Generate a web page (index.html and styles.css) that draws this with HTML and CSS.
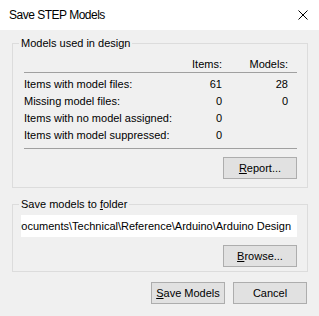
FILE: index.html
```html
<!DOCTYPE html>
<html lang="en">
<head>
    <meta charset="UTF-8">
    <meta name="viewport" content="width=device-width, initial-scale=1.0">
    <title>Save STEP Models</title>
    <link rel="stylesheet" href="styles.css">
</head>
<body>
    <div class="titlebar">
        <span class="title">Save STEP Models</span>
        <svg class="close" width="10" height="10" viewBox="0 0 10 10">
            <path d="M0.5 0.5L9.5 9.5M9.5 0.5L0.5 9.5" stroke="#000" stroke-width="1" fill="none"/>
        </svg>
    </div>
    <div class="main">
        <fieldset class="group">
            <legend>Models used in design</legend>
            <div class="row head"><span></span><span>Items:</span><span>Models:</span></div>
            <div class="stats">
                <div class="row"><span>Items with model files:</span><span>61</span><span>28</span></div>
                <div class="row"><span>Missing model files:</span><span>0</span><span>0</span></div>
                <div class="row"><span>Items with no model assigned:</span><span>0</span><span></span></div>
                <div class="row"><span>Items with model suppressed:</span><span>0</span><span></span></div>
            </div>
            <div class="actions"><button type="button"><u>R</u>eport...</button></div>
        </fieldset>
        <fieldset class="group folder">
            <legend>Save models to <u>f</u>older</legend>
            <div class="field"><span>C:\Users\Owner\Documents\Technical\Reference\Arduino\Arduino Design</span></div>
            <div class="actions"><button type="button"><u>B</u>rowse...</button></div>
        </fieldset>
        <div class="footer">
            <button type="button"><u>S</u>ave Models</button>
            <button type="button">Cancel</button>
        </div>
    </div>
</body>
</html>
```

FILE: styles.css
```css
* { margin: 0; padding: 0; box-sizing: border-box; }
html, body { width: 319px; height: 316px; overflow: hidden; }
body { font-family: 'Liberation Sans', Arial, sans-serif; font-size: 11px; background-color: #f0f0f0; color: #000; }
.titlebar { height: 30px; background: #fff; display: flex; align-items: center; justify-content: space-between; padding: 0 11px 0 9px; }
.title { font-size: 12px; letter-spacing: -0.5px; }
.close { display: block; }
.main { padding: 5px 11px 0 12px; }
.group { border: 1px solid #dcdcdc; padding: 0 10px 8px 11px; min-width: 0; }
.group legend { margin-left: -5px; padding: 0 2px; line-height: 16px; }
.row { display: grid; grid-template-columns: minmax(0, 1fr) 56px 66px; padding-right: 9px; height: 17px; line-height: 17px; white-space: nowrap; }
.row span:nth-child(n+2) { text-align: right; }
.row.head { margin-top: 5px; line-height: 16px; border-bottom: 1px solid #a0a0a0; }
.stats { padding-top: 3px; padding-bottom: 4px; border-bottom: 1px solid #a0a0a0; }
.actions { display: flex; justify-content: flex-end; margin-top: 8px; }
button { width: 74px; height: 22px; border: 1px solid #adadad; background: #e1e1e1; font: inherit; color: #000; }
.folder { margin-top: 8px; padding-bottom: 4px; }
.field { margin-top: 3px; margin-left: -3px; height: 22px; background: #fff; display: flex; justify-content: flex-end; align-items: center; overflow: hidden; white-space: nowrap; padding-right: 6px; }
.field span { flex-shrink: 0; }
.footer { display: flex; justify-content: flex-end; gap: 8px; margin-top: 10px; margin-right: 1px; }
```
